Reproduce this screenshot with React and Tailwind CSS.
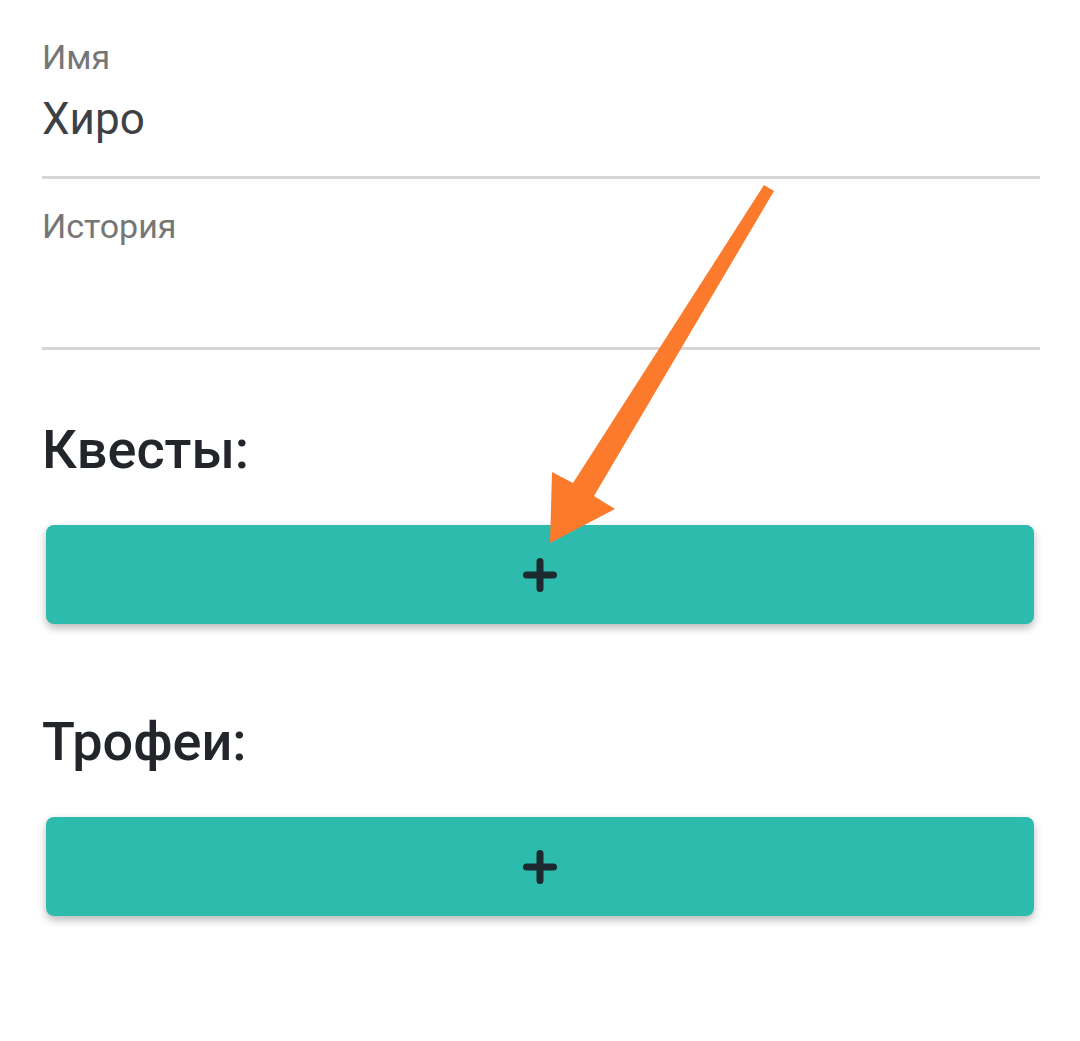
import React from 'react';

const AddButton = () => (
  <button className="flex h-[99px] w-full items-center justify-center rounded-[8px] bg-[#2dbbad] shadow-[0_4px_9px_rgba(0,0,0,0.28)]">
    <svg width="36" height="36" viewBox="0 0 36 36">
      <path d="M18 4.5V31.5M4.5 18H31.5" stroke="#1c2a30" strokeWidth="7" strokeLinecap="round" />
    </svg>
  </button>
);

const Field = ({ label, value, bodyClass }) => (
  <div>
    <div className="text-[34px] leading-[40px] text-[#767676]">{label}</div>
    <div className={bodyClass}>
      {value && <div className="text-[44px] leading-[52px] text-[#3e4144]">{value}</div>}
    </div>
    <div className="h-[3px] bg-[#d6d6d6]" />
  </div>
);

const App = () => {
  return (
    <div className="relative min-h-[1041px] bg-white" style={{ fontFamily: 'Roboto, "Noto Sans", sans-serif' }}>
      <div className="pl-[42px] pr-[40px] pt-[37px]">
        <Field label="Имя" value="Хиро" bodyClass="pt-[16px] pb-[31px]" />
        <div className="pt-[27px]">
          <Field label="История" bodyClass="h-[101px]" />
        </div>

        <h2 className="mt-[69px] text-[54px] font-medium leading-[62px] text-[#222529]">Квесты:</h2>
        <div className="mt-[44px] pl-[4px] pr-[6px]">
          <AddButton />
        </div>

        <h2 className="mt-[87px] text-[54px] font-medium leading-[62px] text-[#222529]">Трофеи:</h2>
        <div className="mt-[44px] pl-[4px] pr-[6px]">
          <AddButton />
        </div>
      </div>

      {/* annotation arrow */}
      <svg className="pointer-events-none absolute left-0 top-0" width="1080" height="1041" viewBox="0 0 1080 1041">
        <polygon
          points="764,185 774,191 594,496 615,509 550,543 552,472 573,483"
          fill="#fb7a2c"
        />
      </svg>
    </div>
  );
};

export default App;
